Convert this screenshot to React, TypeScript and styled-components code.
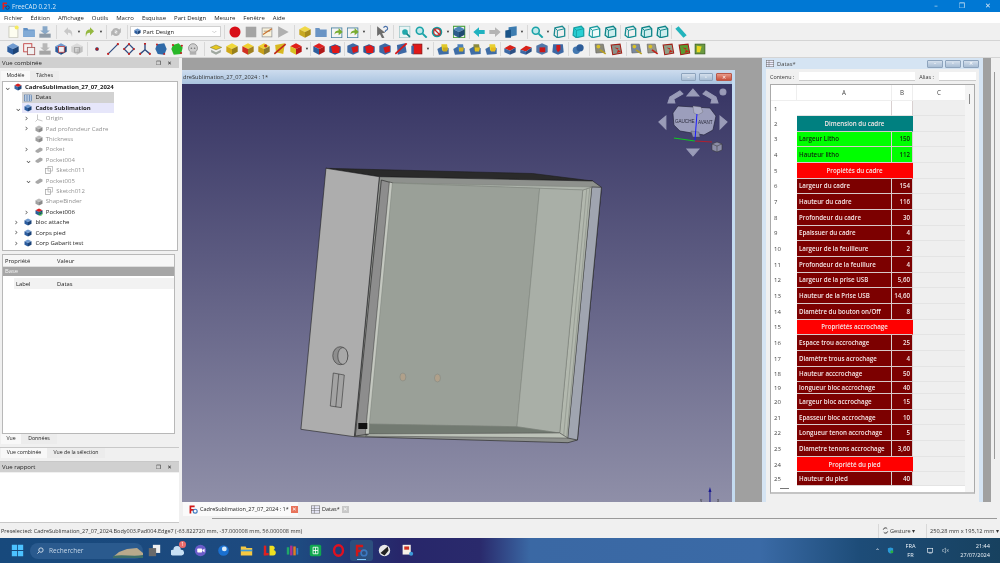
import React from "react";
import styled, { createGlobalStyle } from "styled-components";

const Global = createGlobalStyle`
  html, body { margin: 0; padding: 0; background: #f0f0f0; overflow: hidden; }
  * { box-sizing: border-box; }
`;

const Page = styled.div`
  width: 1000px; height: 563px; display: flex; flex-direction: column; overflow: hidden;
  font-family: "Open Sans", "Noto Sans", sans-serif; font-size: 6px; color: #222; background: #f0f0f0;
  filter: blur(0.4px);
`;
const TitleBar = styled.div`
  height: 12px; flex: none; background: #0078d4; color: #dcebf7; display: flex; align-items: center; padding-left: 2px; gap: 2px;
`;
const TitleText = styled.span`flex: 1; font-size: 6.2px;`;
const WinCtl = styled.span`
  width: 24px; text-align: center; color: #d8e8f5; font-size: 7px; line-height: 12px; font-family: "DejaVu Sans", sans-serif;
`;
const MenuBar = styled.div`
  height: 11px; flex: none; background: #fff; display: flex; align-items: center; gap: 8px; padding-left: 4px; font-size: 6px;
`;
const ToolRow = styled.div<{ $h: number }>`
  height: ${p => p.$h}px; flex: none; display: flex; align-items: center; padding-left: 5px; background: #f0f0f0; border-bottom: 1px solid #d4d4d4;
`;
const Tool = styled.span`width: 16px; height: 16px; flex: none; display: block; & svg { display: block; width: 16px; height: 16px; padding: 1.5px; }`;
const Drop = styled.span`width: 6px; flex: none; text-align: center; font-size: 4px; color: #333; line-height: 16px;`;
const Sep = styled.span<{ $w: number }>`
  width: ${p => p.$w}px; flex: none; height: 14px; position: relative; display: flex; justify-content: center;
  &::after { content: ""; width: 1px; height: 100%; background: #d8d8d8; }
`;
const Combo = styled.div`
  width: 91px; height: 11px; flex: none; background: #fff; border: 1px solid #d0d0d0; display: flex; align-items: center; gap: 2px; padding: 0 3px; font-size: 5.8px;
  & > b { margin-left: auto; font-weight: 400; font-size: 5px; color: #777; }
`;
const Main = styled.div`height: 465px; flex: none; display: flex;`;
const LeftDock = styled.div`width: 182px; flex: none; display: flex; flex-direction: column; padding-right: 3px;`;
const DockHead = styled.div`
  height: 10px; flex: none; background: #d0d0d0; display: flex; align-items: center; padding: 0 4px 0 2px; font-size: 6px;
  & > span:first-child { flex: 1; }
`;
const DockBtn = styled.span`width: 11px; text-align: center; font-size: 5.5px; font-family: "DejaVu Sans", sans-serif;`;
const TabRow = styled.div<{ $h?: number }>`height: ${p => p.$h ?? 10}px; flex: none; display: flex; padding-left: 1px; font-size: 5.2px; align-items: stretch; padding-top: ${p => ((p.$h ?? 10) > 10 ? 3 : 0)}px;`;
const Tab = styled.span<{ $on?: boolean; $w: number }>`
  width: ${p => p.$w}px; text-align: center; line-height: 9px; background: ${p => (p.$on ? "#f8f8f8" : "#ececec")};
`;
const Tree = styled.div`
  height: 170px; flex: none; margin-left: 2px; margin-right: 1px; background: #fff; border: 1px solid #b8b8b8; overflow: hidden;
`;
const TreeRow = styled.div<{ $lvl: number; $muted?: boolean; $bold?: boolean }>`
  height: 10.42px; display: flex; align-items: center; padding-left: ${p => p.$lvl * 10.4}px;
  color: ${p => (p.$muted ? "#929292" : "#1c1c1c")}; font-weight: ${p => (p.$bold ? 700 : 400)}; font-size: 6px; white-space: nowrap;
  & > em { width: 11px; flex: none; padding-left: 1px; font-style: normal; color: #555; font-size: 9px; line-height: 9px; font-family: "DejaVu Sans", sans-serif; font-weight: 400; }
  & > svg { width: 8px; height: 8px; flex: none; margin-right: 3px; }
`;
const TreeLabel = styled.span`line-height: 10.4px;`;
const SelBar = styled.div<{ $c: string }>`
  display: flex; align-items: center; width: 92px; height: 10.4px; margin-left: -2px; background: ${p => p.$c};
  & > svg { width: 8px; height: 8px; flex: none; margin: 0 3px 0 2px; }
`;
const Props = styled.div`
  height: 180px; flex: none; margin: 3px 4px 0 2px; background: #fff; border: 1px solid #b8b8b8; font-size: 5.8px;
`;
const PropHead = styled.div`height: 12px; display: grid; grid-template-columns: 52px 1fr; align-items: center; padding-left: 2px; background: #f6f6f6; border-bottom: 1px solid #ddd;`;
const PropBase = styled.div`height: 9px; background: #a6a6a6; color: #f4f4f4; padding-left: 2px; line-height: 9px;`;
const PropRow = styled.div`height: 11px; margin-top: 2px; margin-left: 11px; display: grid; grid-template-columns: 41px 1fr; align-items: center; padding-left: 2px; background: #f2f2f2;`;
const TabLine = styled.div`height: 1px; flex: none; background: #c8c8c8; margin: 3px 0 0 0;`;
const Report = styled.div`flex: 1; margin-top: 1px; background: #fff; border-bottom: 1px solid #c8c8c8;`;

const Center = styled.div`flex: 1; display: flex; flex-direction: column; min-width: 0;`;
const Mdi = styled.div`height: 444px; flex: none; background: #a0a0a0; display: flex; align-items: flex-start;`;
const SubWin = styled.div`
  width: 553px; height: 432px; margin-top: 12px; flex: none; display: flex; flex-direction: column; background: #c4dbf0; padding-right: 3px;
`;
const SubTitle = styled.div`
  height: 14px; flex: none; display: flex; align-items: center; font-size: 5.7px; padding-left: 1px; gap: 3px; color: #333;
  background: linear-gradient(#cddcee, #a9c3df);
  & > span:first-child { flex: 1; }
`;
const CapBtn = styled.span<{ $close?: boolean; $w?: number }>`
  width: ${p => p.$w ?? 15}px; height: 8px; flex: none; border-radius: 1px; border: 1px solid ${p => (p.$close ? "#b8584a" : "#8ea4bd")};
  background: ${p => (p.$close ? "linear-gradient(#e89a88,#c8503c)" : "linear-gradient(#d4dfec,#a8bdd4)")};
  display: flex; align-items: center; justify-content: center; color: #fff; font-size: 5px; line-height: 1;
`;
const Viewer = styled.div`
  flex: 1; position: relative; overflow: hidden; background: linear-gradient(#373564, #8f8fa8);
  & > svg { position: absolute; left: 0; top: 0; width: 100%; height: 100%; }
`;
const Gap = styled.div<{ $w: number }>`width: ${p => p.$w}px; flex: none;`;
const DataWin = styled.div`
  width: 221px; height: 444px; flex: none; background: #d5e4f3; padding: 0 4px 0 4px; display: flex; flex-direction: column;
`;
const DataTitle = styled.div`
  height: 11px; flex: none; display: flex; align-items: center; gap: 2px; font-size: 5.8px; color: #444;
  & > span:nth-child(2) { flex: 1; margin-left: 1px; }
  & > svg { width: 8px; height: 7px; }
`;
const DataBody = styled.div`flex: 1; background: #f0f0f0; padding: 2px 3px 0 4px; display: flex; flex-direction: column;`;
const FormRow = styled.div`height: 11px; flex: none; display: flex; align-items: center; font-size: 5.4px; color: #333; white-space: nowrap;`;
const Field = styled.div<{ $w: number }>`width: ${p => p.$w}px; height: 9px; flex: none; background: #fff; border-bottom: 1px solid #ccc; margin: 0 4px 0 5px;`;
const SheetBox = styled.div`
  margin-top: 2px; height: 410px; flex: none; width: 205px; background: #fff; border: 1px solid #aaa; border-bottom: 2px solid #c4c4c4; position: relative; overflow: hidden; display: flex; flex-direction: column;
`;
const SheetGrid = styled.div`
  display: grid; grid-template-columns: 26px 95px 21px 53px; font-size: 6.2px; font-weight: 600;
`;
const HCell = styled.div`height: 16px; display: flex; align-items: center; justify-content: center; font-weight: 400; color: #444; background: #fff; border-right: 1px solid #eee; border-bottom: 1px solid #eee;`;
const RowNum = styled.div<{ $h: number }>`
  height: ${p => p.$h}px; display: flex; align-items: center; padding-left: 3px; font-weight: 400; color: #444; background: #fff; font-size: 6px;
`;
const Cell = styled.div<{ $h: number; $kind: "blank" | "teal" | "red" | "green" | "dark" | "empty"; $num?: boolean; $span?: boolean }>`
  height: ${p => p.$h}px; display: flex; align-items: center; padding: 0 2px; white-space: nowrap; overflow: hidden;
  grid-column: ${p => (p.$span ? "span 2" : "auto")};
  justify-content: ${p => (p.$span ? "center" : p.$num ? "flex-end" : "flex-start")};
  background: ${p => ({ blank: "#fff", teal: "#008080", red: "#ff0000", green: "#00ff00", dark: "#7c0000", empty: "#efefef" }[p.$kind])};
  color: ${p => (p.$kind === "green" ? "#0c2a0c" : "#f4e6e6")};
  border-bottom: 1px solid ${p => (p.$kind === "blank" || p.$kind === "empty" ? "#e4e4e4" : "#d8c8c8")};
  border-right: 1px solid ${p => (p.$span ? "transparent" : "#d8d0d0")};
`;
const VTrack = styled.div`position: absolute; right: 0; top: 0; bottom: 0; width: 9px; background: #f4f4f4;`;
const VThumb = styled.div`position: absolute; left: 4px; top: 9px; width: 1px; height: 10px; background: #888;`;
const HThumb = styled.div`position: absolute; left: 9px; bottom: 3px; width: 9px; height: 1px; background: #777;`;
const MdiScroll = styled.div`
  width: 9px; height: 100%; flex: none; background: #f0f0f0; display: flex; justify-content: center; padding: 14px 5px 0 3px;
  &::after { content: ""; width: 1px; height: 90%; background: #9a9a9a; }
`;
const DocTabs = styled.div`height: 14px; flex: none; display: flex; align-items: center; padding-left: 1px; font-size: 5.5px; white-space: nowrap;`;
const DocTab = styled.div<{ $on?: boolean; $w: number }>`
  width: ${p => p.$w}px; height: 100%; display: flex; align-items: center; gap: 2px; padding-left: 6px; padding-right: 1px; background: ${p => (p.$on ? "#fafafa" : "#f0f0f0")}; margin-right: 7px;
  & > svg { width: 9px; height: 9px; flex: none; }
`;
const CloseBox = styled.span<{ $on?: boolean }>`
  width: 7px; height: 7px; flex: none; margin-left: auto; background: ${p => (p.$on ? "#e8735a" : "#c8c8c8")}; color: #fff; text-align: center; font-size: 5.5px; line-height: 7px; font-family: "DejaVu Sans", sans-serif;
`;
const HScroll = styled.div`height: 3px; flex: none; margin-left: 30px; margin-right: 3px; margin-top: 2px; border-top: 1px solid #9a9a9a;`;

const Status = styled.div`height: 15px; flex: none; display: flex; align-items: center; padding-left: 1px; font-size: 5.5px; color: #333;`;
const StatusMsg = styled.span`flex: 1; white-space: nowrap;`;
const StatusCell = styled.div<{ $w: number }>`
  width: ${p => p.$w}px; height: 14px; flex: none; display: flex; align-items: center; gap: 1px; border-left: 1px solid #d8d8d8; padding-left: 3px; font-size: 5.6px;
  & > svg { width: 7px; height: 7px; }
`;
const Taskbar = styled.div`
  height: 25px; flex: none; display: flex; align-items: center; padding-left: 9px; color: #eef4fa;
  background: linear-gradient(90deg, #17497c 0, #1e4a80 300px, #27266a 400px, #2a2a6c 480px, #3a68a4 530px, #3a6aa6 760px, #1d4c78 860px, #17415f 1000px);
`;
const StartBtn = styled.span`width: 17px; height: 16px; flex: none; & svg { display: block; width: 13px; height: 13px; margin: 1px 0 0 2px; }`;
const Search = styled.div`
  width: 113px; height: 16px; margin-left: 4px; flex: none; border-radius: 8px; background: #2a5a8e; display: flex; align-items: center; gap: 5px; padding-left: 7px; font-size: 6.5px; color: #c6d7e8; position: relative;
  & > svg { width: 7px; height: 7px; }
  & > svg:last-child { width: 30px; height: 14px; margin-left: auto; margin-right: 0; }
`;
const TaskIcon = styled.span<{ $on?: boolean }>`
  width: 23px; height: 21px; flex: none; display: flex; align-items: center; justify-content: center; position: relative; border-radius: 3px;
  background: ${p => (p.$on ? "#2c4f7e" : "transparent")};
  & > svg { width: 13px; height: 13px; }
  ${p => (p.$on ? `&::after{content:"";position:absolute;left:7px;right:7px;bottom:1px;height:1px;background:#7cc4ff;}` : "")}
`;
const Badge = styled.span`position: absolute; left: 13px; top: 1px; width: 7px; height: 7px; border-radius: 50%; background: #e96a6a; font-size: 4.5px; line-height: 7px; text-align: center; color: #fff;`;
const Tray = styled.div`margin-left: auto; display: flex; align-items: center; gap: 7.5px; padding-right: 10px; font-size: 5.6px; & > svg { width: 7px; height: 7px; }`;
const Stack = styled.div<{ $w: number; $right?: boolean }>`width: ${p => p.$w}px; display: flex; flex-direction: column; line-height: 9px; text-align: ${p => (p.$right ? "right" : "center")};`;

/* ---------- drawings ---------- */
const Cube = ({ t, l, r }: { t: string; l: string; r: string }) => (
  <>
    <polygon points="8,1 15,4.5 8,8 1,4.5" fill={t} />
    <polygon points="1,4.5 8,8 8,15 1,11.5" fill={l} />
    <polygon points="15,4.5 8,8 8,15 15,11.5" fill={r} />
  </>
);
const Svg = ({ children }: { children: React.ReactNode }) => <svg viewBox="0 0 16 16">{children}</svg>;
const Lens = ({ c = "#1aa3a8" }: { c?: string }) => (
  <>
    <circle cx="6.5" cy="6.5" r="4.3" fill="#bfe8ea" stroke={c} strokeWidth="2" />
    <line x1="10" y1="10" x2="15" y2="15" stroke={c} strokeWidth="2.4" />
  </>
);
const Wire = ({ c = "#129a9e", fill = "none" }: { c?: string; fill?: string }) => (
  <>
    <polygon points="3,3 12,1 15,4 15,13 6,15 2,12" fill={fill} stroke={c} strokeWidth="1.6" />
    <path d="M3 3l3 3v9M6 6l9-2" fill="none" stroke={c} strokeWidth="1.2" />
  </>
);
const BLUE = { t: "#6f9ad0", l: "#2b5c9e", r: "#1d4478" };
const REDB = { t: "#e02020", l: "#2f5f9c", r: "#b01818" };
const GOLD = { t: "#f0d030", l: "#c8a018", r: "#8a7a30" };
const GOLDR = { t: "#f0d030", l: "#d03020", r: "#a08020" };
const Mesh = ({ a, b }: { a: string; b: string }) => (
  <>
    <polygon points="1,8 8,4 15,7 15,14 3,15" fill="#3f6da6" />
    <polygon points="6,2 13,2 14,9 7,10" fill={a} />
    <polygon points="8,6 14,6 13,11 8,11" fill={b} />
  </>
);
const Meas = ({ c = "#8a8a78", x }: { c?: string; x?: string }) => (
  <>
    <polygon points="2,2 12,2 14,12 3,13" fill={c} stroke="#555" strokeWidth=".7" />
    <circle cx="6" cy="5" r="2.3" fill="#d8c028" />
    <line x1="8" y1="9" x2="15" y2="14" stroke={x ?? "#b8a020"} strokeWidth="2" />
  </>
);
const Pentagon = ({ fill }: { fill: string }) => (
  <>
    <polygon points="2,3 13,2 15,13 4,15" fill={fill} stroke="#a02018" strokeWidth="1.3" />
    <polygon points="6,6 11,7 9,13 14,11" fill="#c82018" />
  </>
);
const ICONS: Record<string, React.ReactNode> = {
  doc: <><polygon points="3,1 11,1 14,4 14,15 3,15" fill="#fdfdf0" stroke="#c4c4b8" /><circle cx="12.5" cy="2.5" r="2.5" fill="#f5ea60" /></>,
  folder: <><polygon points="1,3 6,3 7,5 15,5 15,14 1,14" fill="#5f8fc4" /><rect x="1" y="6" width="14" height="8" fill="#82abd6" /></>,
  save: <><polygon points="5,1 11,1 11,6 14,6 8,11 2,6 5,6" fill="#88a8c8" /><rect x="1" y="10" width="14" height="5" fill="#8c9aa8" /></>,
  undo: <path d="M3 7l5-5v3c4 0 6 3 5 9-1-4-2-5-5-5v3z" fill="#c8c8c8" />,
  redo: <path d="M13 7L8 2v3C4 5 2 8 3 14c1-4 2-5 5-5v3z" fill="#94b840" />,
  refresh: <path d="M3 8a5 5 0 0 1 9-3l2-2v6H8l2-2a3 3 0 0 0-5 1zM13 8a5 5 0 0 1-9 3l-2 2V7h6L6 9a3 3 0 0 0 5-1z" fill="#b4b4b4" />,
  rec: <circle cx="8" cy="8" r="6.8" fill="#d80f18" />,
  stop: <rect x="1.5" y="1.5" width="13" height="13" fill="#a4a4a4" />,
  edit: <><rect x="2" y="3" width="12" height="11" fill="#f8f2dc" stroke="#999" /><line x1="4" y1="7" x2="12" y2="7" stroke="#a09070" /><line x1="3" y1="11" x2="14" y2="4" stroke="#c87030" strokeWidth="1.5" /></>,
  play: <polygon points="2,1 15,8 2,15" fill="#b0b0b0" />,
  mac: <Cube t="#f0d848" l="#c8a820" r="#a88a18" />,
  fold2: <><polygon points="1,3 6,3 7,5 15,5 15,14 1,14" fill="#6a94c4" /></>,
  share: <><rect x="1" y="3" width="13" height="12" fill="#f4f4f4" stroke="#3d7a9c" /><path d="M5 11c0-4 3-5 5-5V3l5 5-5 4V9c-2 0-4 0-5 2z" fill="#78ac30" /></>,
  what: <><polygon points="2,1 12,9 8,9.5 11,15 8,15.6 5.5,10.5 2,13" fill="#6c6c6c" /><path d="M10 3a2.5 2.5 0 1 1 3 3l-1 1v1" fill="none" stroke="#4a70a8" strokeWidth="1.4" /></>,
  fit: <><rect x="1" y="1" width="13" height="14" fill="#e8f4f4" stroke="#9ac4c6" /><circle cx="8" cy="8" r="3.5" fill="#20a8ac" /><line x1="10" y1="10" x2="14" y2="14" stroke="#128488" strokeWidth="2" /></>,
  lens: <Lens />,
  nodraw: <><circle cx="8" cy="8" r="6.5" fill="#129a9e" /><circle cx="8" cy="8" r="4" fill="#dff" stroke="#d02020" strokeWidth="1.4" /><line x1="4" y1="4" x2="12" y2="12" stroke="#d02020" strokeWidth="1.6" /></>,
  bbox: <><rect x="1" y="1" width="14" height="14" fill="none" stroke="#4aa040" strokeWidth="1.4" /><Cube t="#4c86b8" l="#2c5c8c" r="#1d4a70" /></>,
  left: <polygon points="1,8 8,2 8,5.5 15,5.5 15,10.5 8,10.5 8,14" fill="#20b2c0" />,
  right: <polygon points="15,8 8,2 8,5.5 1,5.5 1,10.5 8,10.5 8,14" fill="#b4b4b4" />,
  stereo: <><polygon points="5,2 15,1 15,12 5,14" fill="#3c7cb0" /><polygon points="1,6 8,5 8,15 1,15" fill="#1a5488" /></>,
  wiso: <Wire c="#1a8a90" />,
  wfill: <Wire c="#18a0a4" fill="#28d0d4" />,
  wfront: <Wire c="#1a9a9e" fill="#ecfafa" />,
  wb: <Wire c="#148c90" />,
  wc: <Wire c="#0e8488" fill="#cdeeee" />,
  ruler: <polygon points="5,1 15,12 11,15 1,4" fill="#22b4bc" />,
  body: <Cube {...BLUE} />,
  sketch: <><rect x="1.5" y="1.5" width="10" height="10" fill="#f4f0f0" stroke="#c03030" /><rect x="6" y="6" width="9" height="9" fill="#f0f0f0" stroke="#a05050" /></>,
  imp: <><polygon points="5,1 11,1 11,6 14,6 8,11 2,6 5,6" fill="#b8b8b8" /><rect x="1" y="10" width="14" height="5" fill="#a4a4a4" /></>,
  sheetb: <><Cube {...BLUE} /><rect x="5" y="5" width="7" height="7" fill="#f0f0f0" stroke="#c04040" /></>,
  gbox: <><Cube t="#dadada" l="#cfcfcf" r="#c0c0c0" /><rect x="5" y="6" width="6" height="6" fill="none" stroke="#a0a0a0" /></>,
  point: <circle cx="8" cy="8" r="2" fill="#b81818" stroke="#304c80" strokeWidth=".7" />,
  line: <><line x1="2" y1="14" x2="14" y2="2" stroke="#304c80" strokeWidth="1.6" /><circle cx="2" cy="14" r="1.4" fill="#c02020" /><circle cx="14" cy="2" r="1.4" fill="#c02020" /></>,
  plane: <><polygon points="8,2 14,8 8,14 2,8" fill="none" stroke="#304c80" strokeWidth="1.6" /><circle cx="8" cy="2" r="1.3" fill="#c02020" /><circle cx="14" cy="8" r="1.3" fill="#c02020" /><circle cx="2" cy="8" r="1.3" fill="#c02020" /><circle cx="8" cy="14" r="1.3" fill="#c02020" /></>,
  axes: <><path d="M8 1v8M8 9l6 5M8 9l-6 5" stroke="#304c80" strokeWidth="1.7" fill="none" /><circle cx="8" cy="1.5" r="1.3" fill="#c02020" /><circle cx="14" cy="14" r="1.3" fill="#c02020" /><circle cx="2" cy="14" r="1.3" fill="#c02020" /></>,
  shape: <><polygon points="3,2 12,1 15,8 12,15 4,14 1,8" fill="#2f6aa8" /><circle cx="3" cy="2.5" r="1.2" fill="#c02020" /><circle cx="12" cy="14" r="1.2" fill="#c02020" /></>,
  gshape: <><polygon points="3,3 10,1 15,6 13,14 4,15 1,8" fill="#28b828" /><circle cx="3" cy="3" r="1.3" fill="#c02020" /><circle cx="13" cy="13" r="1.3" fill="#c02020" /><circle cx="14" cy="4" r="1.3" fill="#c02020" /></>,
  head: <><circle cx="8" cy="7" r="5.5" fill="#cfcfcf" stroke="#8a8a8a" /><rect x="4" y="11" width="8" height="4" fill="#b0b0b0" /><circle cx="6" cy="7" r="1" fill="#777" /><circle cx="10" cy="7" r="1" fill="#777" /></>,
  pad: <><polygon points="1,6 8,3 15,6 8,9" fill="#e8c820" stroke="#6a6a20" strokeWidth=".6" /><polygon points="2,9 8,12 14,9 14,12 8,15 2,12" fill="#a0a8a0" /></>,
  padb: <Cube t="#f0d838" l="#d0a818" r="#988018" />,
  padr: <Cube {...GOLDR} />,
  padg: <><Cube {...GOLD} /><circle cx="10" cy="4" r="2" fill="#c04020" /></>,
  loft: <><polygon points="2,3 14,1 12,14 3,12" fill="#d8b820" /><line x1="1" y1="14" x2="15" y2="2" stroke="#c02818" strokeWidth="2" /></>,
  boxr: <><Cube t="#e02018" l="#d8c020" r="#b81818" /></>,
  pock: <Cube {...REDB} />,
  pocr: <><polygon points="1,5 8,2 15,5 15,12 8,15 1,12" fill="#2c5c98" /><polygon points="3,5 10,3 14,6 13,13 5,13" fill="#e01818" /></>,
  pocs: <><polygon points="1,4 8,1 15,4 15,12 8,15 1,12" fill="#3c68a4" /><polygon points="6,6 14,4 14,11 8,13" fill="#d81818" /></>,
  pocc: <><polygon points="3,3 13,1 15,12 4,15" fill="#3c68a4" /><line x1="1" y1="14" x2="15" y2="1" stroke="#d81818" strokeWidth="2.2" /></>,
  redbox: <><rect x="3" y="2" width="11" height="12" fill="#e01818" stroke="#8a1010" /><rect x="1" y="4" width="3" height="10" fill="#3c68a4" /></>,
  m1: <Mesh a="#e0c828" b="#c8a820" />,
  m2: <Mesh a="#4c80b8" b="#d0b020" />,
  m3: <Mesh a="#8a8a40" b="#e0c020" />,
  m4: <Mesh a="#e8d030" b="#e8b818" />,
  rp1: <><polygon points="1,7 8,3 15,6 8,10" fill="#d82018" /><polygon points="1,7 8,10 8,15 1,12" fill="#3c68a4" /><polygon points="15,6 8,10 8,15 15,12" fill="#2c5084" /></>,
  rp2: <><polygon points="1,9 8,4 15,6 8,11" fill="#d82018" /><polygon points="1,9 8,11 8,15 1,13" fill="#3c68a4" /><polygon points="15,6 8,11 8,15 15,11" fill="#2c5084" /></>,
  rp3: <><polygon points="1,4 8,1 15,4 15,12 8,15 1,12" fill="#5078aa" /><rect x="5" y="6" width="7" height="6" fill="#c81818" /></>,
  rp4: <><polygon points="2,2 14,2 15,12 8,15 1,12" fill="#3c68a4" /><polygon points="6,3 11,3 11,9 8,12 6,9" fill="#d01818" /></>,
  bool: <><circle cx="6" cy="9.5" r="4.5" fill="#4478b0" /><circle cx="10.5" cy="6.5" r="4.5" fill="#2c5c98" /></>,
  ms1: <Meas />,
  ms2: <Pentagon fill="#8a9088" />,
  ms3: <Meas c="#7888a0" />,
  ms4: <Meas c="#989888" x="#c02018" />,
  ms5: <Pentagon fill="#90a088" />,
  ms6: <Pentagon fill="#5a9a30" />,
  ms8: <><rect x="2" y="2" width="12" height="12" fill="#6a9a40" stroke="#3a6020" /><polygon points="4,4 10,5 8,12 4,12" fill="#e8d820" /></>,
};
const ROW1: (string | number)[] = ["doc","folder","save",7,"undo","v","redo","v",4,"refresh",6,"COMBO",6,"rec","stop","edit","play",6,"mac","fold2","share","share","v",7,"what",7,"fit","lens","nodraw","v","bbox",4,"left","right","stereo","v",4,"lens","v","wiso",3,"wfill","wfront","wc",4,"wb","wc","wc",3,"ruler"];
const ROW2: (string | number)[] = ["body","sketch","imp","sheetb","gbox",4,"point","line","plane","axes","shape","gshape","head",7,"pad","padb","padr","padg","loft","boxr","v",1,"pock","pocr",2,"pocs","pocr","pocs","pocc","redbox","v",4,"m1","m2","m3","m4",3,"rp1","rp2","rp3","rp4",4,"bool",6,"ms1","ms2",4,"ms3","ms4","ms5","ms6","ms8"];

const FreeLogo = () => (
  <svg viewBox="0 0 16 16">
    <polygon points="1,1 10,1 10,4 4,4 4,7 9,7 9,10 4,10 4,15 1,15" fill="#d01818" />
    <circle cx="11" cy="11" r="3.5" fill="none" stroke="#3c78c0" strokeWidth="2" />
  </svg>
);
const Toolbar = ({ items, h }: { items: (string | number)[]; h: number }) => (
  <ToolRow $h={h}>
    {items.map((it, i) =>
      typeof it === "number" ? <Sep key={i} $w={it} /> :
      it === "v" ? <Drop key={i}>▼</Drop> :
      it === "COMBO" ? (
        <Combo key={i}><svg width="7" height="7" viewBox="0 0 16 16"><Cube {...BLUE} /></svg>Part Design<b>﹀</b></Combo>
      ) : <Tool key={i}><Svg>{ICONS[it]}</Svg></Tool>
    )}
  </ToolRow>
);
const TI: Record<string, React.ReactNode> = {
  doc: <Svg><Cube t="#d82020" l="#3c68a4" r="#1d4478" /></Svg>,
  sheet: <Svg><rect x="1" y="2" width="14" height="12" fill="#e8eef8" stroke="#2c5c98" /><path d="M1 6h14M1 10h14M6 2v12M11 2v12" stroke="#2c5c98" /></Svg>,
  body: <Svg><Cube {...BLUE} /></Svg>,
  axes: <Svg><path d="M5 1v10M5 11l10 3M5 11l-4 4" stroke="#b0b0b0" strokeWidth="1.4" fill="none" /></Svg>,
  gray: <Svg><Cube t="#bdbdbd" l="#a0a0a0" r="#8a8a8a" /></Svg>,
  flat: <Svg><polygon points="1,9 10,3 15,5 15,9 6,14 1,12" fill="#a8a8a8" /></Svg>,
  sk: <Svg><rect x="1" y="5" width="10" height="10" fill="#fff" stroke="#999" strokeWidth="1.3" /><rect x="6" y="1" width="9" height="9" fill="none" stroke="#aaa" strokeWidth="1.3" /></Svg>,
  mix: <Svg><Cube t="#d82020" l="#2c5c98" r="#1d4478" /><circle cx="11" cy="12" r="3" fill="none" stroke="#2cc02c" strokeWidth="1.5" /></Svg>,
};
const TREE: { l: number; a?: string; i: string; t: string; m?: boolean }[] = [
  { l: 2, a: "›", i: "axes", t: "Origin", m: true },
  { l: 2, a: "›", i: "gray", t: "Pad profondeur Cadre", m: true },
  { l: 2, i: "gray", t: "Thickness", m: true },
  { l: 2, a: "›", i: "flat", t: "Pocket", m: true },
  { l: 2, a: "⌄", i: "flat", t: "Pocket004", m: true },
  { l: 3, i: "sk", t: "Sketch011", m: true },
  { l: 2, a: "⌄", i: "flat", t: "Pocket005", m: true },
  { l: 3, i: "sk", t: "Sketch012", m: true },
  { l: 2, i: "gray", t: "ShapeBinder", m: true },
  { l: 2, a: "›", i: "mix", t: "Pocket006" },
  { l: 1, a: "›", i: "body", t: "bloc attache" },
  { l: 1, a: "›", i: "body", t: "Corps pied" },
  { l: 1, a: "›", i: "body", t: "Corp Gabarit test" },
];

type SheetRow = { n: number; h?: number; kind?: "teal" | "red" | "green" | "dark"; a?: string; b?: string };
const SHEET: SheetRow[] = [
  { n: 1, h: 15 },
  { n: 2, kind: "teal", a: "Dimension du cadre" },
  { n: 3, kind: "green", a: "Largeur Litho", b: "150" },
  { n: 4, kind: "green", a: "Hauteur litho", b: "112" },
  { n: 5, kind: "red", a: "Propiétés du cadre" },
  { n: 6, kind: "dark", a: "Largeur du cadre", b: "154" },
  { n: 7, kind: "dark", a: "Hauteur du cadre", b: "116" },
  { n: 8, kind: "dark", a: "Profondeur du cadre", b: "30" },
  { n: 9, kind: "dark", a: "Epaissuer du cadre", b: "4" },
  { n: 10, kind: "dark", a: "Largeur de la feuilleure", b: "2" },
  { n: 11, kind: "dark", a: "Profondeur de la feuillure", b: "4" },
  { n: 12, kind: "dark", a: "Largeur de la prise USB", b: "5,60" },
  { n: 13, kind: "dark", a: "Hauteur de la Prise USB", b: "14,60" },
  { n: 14, kind: "dark", a: "Diamètre du bouton on/Off", b: "8" },
  { n: 15, kind: "red", a: "Propriétés  accrochage" },
  { n: 16, kind: "dark", a: "Espace trou accrochage", b: "25" },
  { n: 17, kind: "dark", a: "Diamètre trous acrochage", b: "4" },
  { n: 18, kind: "dark", a: "Hauteur acccrochage", b: "50" },
  { n: 19, h: 12, kind: "dark", a: "longueur bloc accrochage", b: "40" },
  { n: 20, kind: "dark", a: "Largeur bloc accrochage", b: "15" },
  { n: 21, kind: "dark", a: "Epasseur bloc accrochage", b: "10" },
  { n: 22, kind: "dark", a: "Longueur tenon accrochage", b: "5" },
  { n: 23, kind: "dark", a: "Diametre tenons accrochage", b: "3,60" },
  { n: 24, kind: "red", a: "Propriété du pied" },
  { n: 25, h: 14, kind: "dark", a: "Hauteur du pied", b: "40" },
];

const Model = () => (
  <svg viewBox="183 84 549 418" preserveAspectRatio="none">
    <g stroke="#1e1e1e" strokeWidth=".6">
      <polygon points="326.7,168.3 533,173.5 593,181 380,176.7" fill="#2a2a2a" />
      <polygon points="380,176.7 593,181 601.7,187.3 577.7,440 568.3,442.7 355,436.7" fill="#8e918d" />
      <polygon points="326.7,168.3 380,176.7 355,436.7 301.7,429.3" fill="#adadad" />
      <polygon points="382,180 393,183 370,434 356,436" fill="#8d8d8d" />
      <polygon points="390,182 394,183 370,434 366,434" fill="#c4c8c0" strokeWidth=".4" />
      <polygon points="592,187 601.7,187.3 577.7,440 568,438" fill="#a0a5b0" />
      <polygon points="583,190 592,187 568,438 560,433" fill="#b2b8ae" strokeWidth=".3" />
    </g>
    <g stroke="#7f857d" strokeWidth=".5">
      <polygon points="393,183 592,187 583,190 540,188.3" fill="#aeb4ac" />
      <polygon points="393,183 540,188.3 517.3,426.7 370,424" fill="#9aa098" />
      <polygon points="540,188.3 583,190 560,433 517.3,426.7" fill="#a9afa7" />
      <polygon points="370,424 517.3,426.7 560,433 370,434" fill="#727a71" />
      <line x1="587" y1="189" x2="564" y2="435" />
      <line x1="590" y1="188" x2="567" y2="437" />
    </g>
    <polygon points="370,434 560,433 568,438 366,436" fill="#bcc2b8" stroke="#333" strokeWidth=".4" />
    <rect x="359" y="423" width="9" height="6" fill="#111" />
    <g stroke="#333" strokeWidth=".6">
      <ellipse cx="341" cy="355.7" rx="7.5" ry="9" fill="#8e8e8e" />
      <ellipse cx="343.5" cy="356" rx="5" ry="8.4" fill="#a8a8a8" />
      <polygon points="334,373 345,375 342,407.6 331,406" fill="#a3a3a3" />
      <line x1="339.5" y1="374" x2="336.5" y2="407" />
    </g>
    <g stroke="#8a8e86" strokeWidth=".8" fill="#b0a08a">
      <ellipse cx="403.5" cy="377" rx="3" ry="4" />
      <ellipse cx="438" cy="378" rx="3" ry="4" />
    </g>
    <g fill="#9a9cb8" stroke="#9a9cb8">
      <polygon points="687,96 699,96 693,89" />
      <polygon points="659,122 666,116 666,129" />
      <polygon points="727,122 720,116 720,129" />
      <polygon points="687,149 699,149 693,156" />
      <path d="M668 103l2-6 10-6 3 3-9 5 1 4z" />
      <path d="M718 103l-2-6-10-6-3 3 9 5-1 4z" />
      <circle cx="723" cy="92" r="3" />
    </g>
    <polygon points="678,106 710,108 716,116 713,130 704,135 680,131 674,125 673,113" fill="#9c9ebc" stroke="#24243c" strokeWidth=".7" />
    <polygon points="693,106 701,107 703,112 698,115 694,113" fill="#aeb0c8" stroke="#555" strokeWidth=".3" />
    <polygon points="691,131 699,132 700,137 693,137" fill="#8a8cac" stroke="#444" strokeWidth=".3" />
    <text x="675" y="123" fontSize="4.6" fill="#2a2a3c" fontFamily="Liberation Sans, sans-serif">GAUCHE</text>
    <text x="698" y="124" fontSize="4.6" fill="#2a2a3c" fontFamily="Liberation Sans, sans-serif">AVANT</text>
    <line x1="697" y1="114" x2="695" y2="141" stroke="#1a1aff" strokeWidth="1" />
    <line x1="674" y1="138" x2="695" y2="141" stroke="#10c820" strokeWidth="1" />
    <line x1="695" y1="141" x2="712" y2="142" stroke="#b02030" strokeWidth="1" />
    <g stroke="#333" strokeWidth=".5">
      <polygon points="717,142 722,144 722,150 717,152 712,150 712,144" fill="#8c8ea8" />
      <path d="M712 144l5 2 5-2M717 146v6" fill="none" />
    </g>
    <line x1="710" y1="502" x2="710" y2="490" stroke="#1a1a90" strokeWidth="1" />
    <polygon points="708.5,492 711.5,492 710,487" fill="#1a1a90" />
    <text x="700" y="502" fontSize="4.5" fill="#333" fontFamily="Liberation Sans, sans-serif">y</text>
    <text x="717" y="502" fontSize="4.5" fill="#333" fontFamily="Liberation Sans, sans-serif">x</text>
  </svg>
);

const SheetIcon = () => (
  <svg viewBox="0 0 16 14"><rect x=".5" y=".5" width="15" height="13" fill="#eef" stroke="#666" /><path d="M0 5h16M0 9h16M6 0v14" stroke="#666" /></svg>
);

export default function App() {
  return (
    <Page>
      <Global />
      <TitleBar>
        <svg width="8" height="8" viewBox="0 0 16 16"><polygon points="1,1 10,1 10,4 4,4 4,7 9,7 9,10 4,10 4,15 1,15" fill="#e02020" /><circle cx="11" cy="11" r="3.5" fill="none" stroke="#104080" strokeWidth="2" /></svg>
        <TitleText>FreeCAD 0.21.2</TitleText>
        <WinCtl>–</WinCtl><WinCtl>❐</WinCtl><WinCtl>✕</WinCtl>
      </TitleBar>
      <MenuBar>
        {["Fichier","Édition","Affichage","Outils","Macro","Esquisse","Part Design","Mesure","Fenêtre","Aide"].map(m => <span key={m}>{m}</span>)}
      </MenuBar>
      <Toolbar items={ROW1} h={18} />
      <Toolbar items={ROW2} h={17} />
      <Main>
        <LeftDock>
          <DockHead><span>Vue combinée</span><DockBtn>❐</DockBtn><DockBtn>✕</DockBtn></DockHead>
          <TabRow $h={13}><Tab $on $w={29}>Modèle</Tab><Tab $w={29}>Tâches</Tab></TabRow>
          <Tree>
            <TreeRow $lvl={0} $bold><em>⌄</em><svg viewBox="0 0 16 16"><Cube t="#d82020" l="#3c68a4" r="#1d4478" /></svg><TreeLabel>CadreSublimation_27_07_2024</TreeLabel></TreeRow>
            <TreeRow $lvl={1}><em /><SelBar $c="#d2d2d2">{TI.sheet}<TreeLabel>Datas</TreeLabel></SelBar></TreeRow>
            <TreeRow $lvl={1} $bold><em>⌄</em><SelBar $c="#e6e6fa">{TI.body}<TreeLabel>Cadte Sublimation</TreeLabel></SelBar></TreeRow>
            {TREE.map(r => (
              <TreeRow key={r.t} $lvl={r.l} $muted={r.m}>
                <em>{r.a ?? ""}</em>{TI[r.i]}<TreeLabel>{r.t}</TreeLabel>
              </TreeRow>
            ))}
          </Tree>
          <Props>
            <PropHead><span>Propriété</span><span>Valeur</span></PropHead>
            <PropBase>Base</PropBase>
            <PropRow><span>Label</span><span>Datas</span></PropRow>
          </Props>
          <TabRow><Tab $on $w={20}>Vue</Tab><Tab $w={36}>Données</Tab></TabRow>
          <TabLine />
          <TabRow><Tab $on $w={46}>Vue combinée</Tab><Tab $w={58}>Vue de la sélection</Tab></TabRow>
          <TabLine />
          <DockHead><span>Vue rapport</span><DockBtn>❐</DockBtn><DockBtn>✕</DockBtn></DockHead>
          <Report />
        </LeftDock>
        <Center>
          <Mdi>
            <SubWin>
              <SubTitle>
                <span>dreSublimation_27_07_2024 : 1*</span>
                <CapBtn>–</CapBtn><CapBtn $w={14}>▫</CapBtn><CapBtn $close $w={16}>✕</CapBtn>
              </SubTitle>
              <Viewer><Model /></Viewer>
            </SubWin>
            <Gap $w={27} />
            <DataWin>
              <DataTitle>
                <SheetIcon /><span>Datas*</span>
                <CapBtn $w={16}>–</CapBtn><CapBtn $w={16}>▫</CapBtn><CapBtn $w={16}>✕</CapBtn>
              </DataTitle>
              <DataBody>
                <FormRow>Contenu :<Field $w={116} />Alias :<Field $w={37} /></FormRow>
                <SheetBox>
                  <SheetGrid>
                    <HCell /><HCell>A</HCell><HCell>B</HCell><HCell>C</HCell>
                    {SHEET.map(r => {
                      const h = r.h ?? 15.66;
                      const span = r.kind === "teal" || r.kind === "red";
                      return (
                        <React.Fragment key={r.n}>
                          <RowNum $h={h}>{r.n}</RowNum>
                          {r.kind ? <Cell $h={h} $kind={r.kind} $span={span}>{r.a}</Cell> : <Cell $h={h} $kind="blank" />}
                          {!span && (r.kind ? <Cell $h={h} $kind={r.kind} $num>{r.b}</Cell> : <Cell $h={h} $kind="blank" />)}
                          <Cell $h={h} $kind="empty" />
                        </React.Fragment>
                      );
                    })}
                  </SheetGrid>
                  <VTrack><VThumb /></VTrack>
                  <HThumb />
                </SheetBox>
              </DataBody>
            </DataWin>
            <Gap $w={8} />
            <MdiScroll />
          </Mdi>
          <DocTabs>
            <DocTab $on $w={115}><FreeLogo />CadreSublimation_27_07_2024 : 1*<CloseBox $on>✕</CloseBox></DocTab>
            <DocTab $w={44}><SheetIcon />Datas*<CloseBox>✕</CloseBox></DocTab>
          </DocTabs>
          <HScroll />
        </Center>
      </Main>
      <Status>
        <StatusMsg>Preselected: CadreSublimation_27_07_2024.Body003.Pad004.Edge7 (-63.822720 mm, -37.000008 mm, 56.000008 mm)</StatusMsg>
        <StatusCell $w={48}><svg viewBox="0 0 16 16"><path d="M3 6a5 5 0 0 1 9-2M13 10a5 5 0 0 1-9 2" stroke="#333" strokeWidth="2" fill="none" /></svg>Gesture ▾</StatusCell>
        <StatusCell $w={74}>250,28 mm x 195,12 mm ▾</StatusCell>
      </Status>
      <Taskbar>
        <StartBtn><svg viewBox="0 0 16 16"><path d="M1 1h6.5v6.5H1zM8.5 1H15v6.5H8.5zM1 8.5h6.5V15H1zM8.5 8.5H15V15H8.5z" fill="#4cc2ff" /></svg></StartBtn>
        <Search>
          <svg viewBox="0 0 16 16"><circle cx="9" cy="7" r="5" fill="none" stroke="#dfe8f0" strokeWidth="2" /><line x1="5" y1="11" x2="1" y2="15" stroke="#dfe8f0" strokeWidth="2" /></svg>
          Rechercher
          <svg viewBox="0 0 30 14"><path d="M0 13l6-5 8-3 10-1 6 5v5H0z" fill="#b8a98c" /><path d="M0 14h30v-3c-10 2-20-1-30 1z" fill="#3c6e6a" /></svg>
        </Search>
        <TaskIcon><svg viewBox="0 0 16 16"><rect x="6" y="1" width="9" height="10" fill="#f0f0f0" /><rect x="1" y="5" width="9" height="10" fill="#6a6a6a" /></svg></TaskIcon>
        <TaskIcon><svg viewBox="0 0 16 16"><path d="M2 14a3.5 3.5 0 0 1 1-7 4.5 4.5 0 0 1 9 0 3.5 3.5 0 0 1 1 7z" fill="#c8e0f4" /></svg><Badge>1</Badge></TaskIcon>
        <TaskIcon><svg viewBox="0 0 16 16"><circle cx="8" cy="8" r="7" fill="#6a5cc8" /><rect x="4" y="5.5" width="6" height="5" rx="1" fill="#fff" /><polygon points="10,8 13,5.5 13,10.5" fill="#fff" /></svg></TaskIcon>
        <TaskIcon><svg viewBox="0 0 16 16"><circle cx="8" cy="8" r="6.5" fill="#1a70d0" /><circle cx="9" cy="6" r="3" fill="#d8eaf8" /></svg></TaskIcon>
        <TaskIcon><svg viewBox="0 0 16 16"><path d="M1 3h6l1 2h7v9H1z" fill="#f5c842" /><rect x="1" y="7" width="14" height="2" fill="#3c9ad8" /></svg></TaskIcon>
        <TaskIcon><svg viewBox="0 0 16 16"><rect x="1" y="2" width="3" height="12" fill="#e02020" /><rect x="1" y="11" width="6" height="3" fill="#e02020" /><path d="M8 2h4a3 3 0 0 1 1 5.500a3 3 0 0 1-1 6.500H8z" fill="#f0e020" /></svg></TaskIcon>
        <TaskIcon><svg viewBox="0 0 16 16"><rect x="1" y="4" width="3" height="9" fill="#20a868" /><rect x="5" y="2" width="3" height="12" fill="#b03090" /><rect x="9" y="3" width="3" height="11" fill="#e08020" /><rect x="13" y="5" width="2" height="8" fill="#3080d0" /></svg></TaskIcon>
        <TaskIcon><svg viewBox="0 0 16 16"><rect x="1" y="1" width="14" height="14" rx="2" fill="#10a850" /><path d="M5 4h6v8H5zM5 8h6M8 4v8" stroke="#fff" fill="none" /></svg></TaskIcon>
        <TaskIcon><svg viewBox="0 0 16 16"><ellipse cx="8" cy="8" rx="5.500" ry="6.500" fill="none" stroke="#e01020" strokeWidth="3" /></svg></TaskIcon>
        <TaskIcon $on><FreeLogo /></TaskIcon>
        <TaskIcon><svg viewBox="0 0 16 16"><circle cx="8" cy="8" r="7" fill="#e8e8e8" /><path d="M3 11l9-8 1 5-5 6z" fill="#222" /></svg></TaskIcon>
        <TaskIcon><svg viewBox="0 0 16 16"><rect x="2" y="1" width="10" height="12" fill="#f4f0e8" /><rect x="4" y="3" width="6" height="4" fill="#d03020" /><circle cx="12.500" cy="12" r="2.500" fill="#3c9ad8" /></svg></TaskIcon>
        <Tray>
          <span>⌃</span>
          <svg viewBox="0 0 16 16"><path d="M8 1l6 2v5c0 4-3 6-6 7-3-1-6-3-6-7V3z" fill="#2a9ad8" /><circle cx="11" cy="11" r="3.500" fill="#28b040" /></svg>
          <Stack $w={18}><span>FRA</span><span>FR</span></Stack>
          <svg viewBox="0 0 16 16"><rect x="1" y="3" width="12" height="9" fill="none" stroke="#e8eef4" strokeWidth="1.500" /><path d="M4 14h7" stroke="#e8eef4" strokeWidth="1.500" /></svg>
          <svg viewBox="0 0 16 16"><polygon points="1,6 4,6 8,2 8,14 4,10 1,10" fill="none" stroke="#e8eef4" /><path d="M11 5l4 6M15 5l-4 6" stroke="#e8eef4" /></svg>
          <Stack $w={34} $right><span>21:44</span><span>27/07/2024</span></Stack>
        </Tray>
      </Taskbar>
    </Page>
  );
}
